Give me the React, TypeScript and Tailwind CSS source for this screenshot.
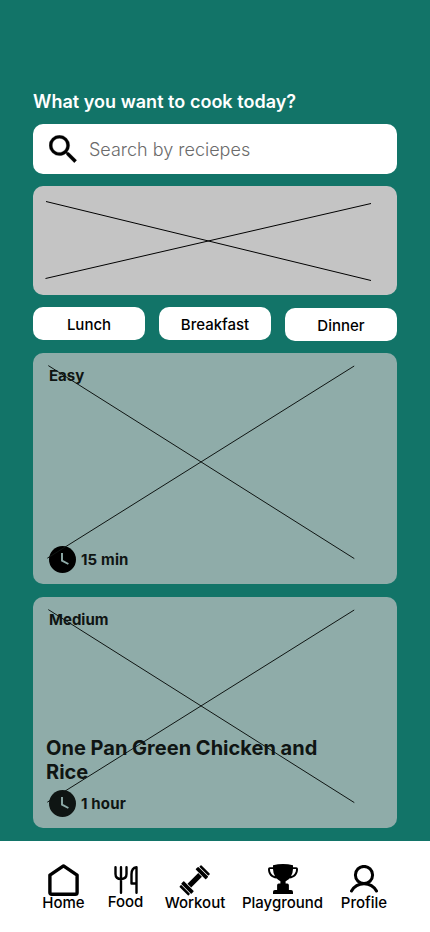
import React from "react";

function SearchIcon() {
  return (
    <svg className="mr-px h-7 w-7 shrink-0" viewBox="2.9 2.9 17.8 17.8" fill="black" stroke="black" strokeWidth=".2">
      <path d="M15.5 14h-.79l-.28-.27A6.471 6.471 0 0 0 16 9.5 6.5 6.5 0 1 0 9.5 16c1.61 0 3.09-.59 4.23-1.57l.27.28v.79l5 4.99L20.49 19l-4.99-5zm-6 0C7.01 14 5 11.99 5 9.5S7.01 5 9.5 5 14 7.01 14 9.5 11.99 14 9.5 14z" />
    </svg>
  );
}

function ClockIcon({ color }: { color: string }) {
  return (
    <svg className="h-[27px] w-[27px] shrink-0" viewBox="0 0 27 27" fill="none">
      <circle cx="13.5" cy="13.5" r="13.5" fill={color} />
      <path d="M13 7v7.6l6.4 3.4" stroke="#8faca9" strokeWidth="1.9" />
    </svg>
  );
}

function HomeIcon() {
  return (
    <svg className="h-8 w-[31px]" viewBox="0 0 31 32" fill="none" stroke="black" strokeWidth="3.4" strokeLinejoin="round">
      <path d="M15.5 1.9 29.1 11.2v17.3q0 1.8-1.8 1.8H3.7q-1.8 0-1.8-1.8V11.2Z" />
    </svg>
  );
}

function FoodIcon() {
  return (
    <svg className="h-7 w-6" viewBox="0 0 24 28" fill="none" stroke="black" strokeWidth="2.4" strokeLinecap="round" strokeLinejoin="round">
      <path d="M1.5 1.3v6.7q0 5 5.500 5t5.500-5V1.300M7 1.300v25.400M22.500 26.700V1.300c-4 .6-5 4-5 7v9.200h5" />
    </svg>
  );
}

function WorkoutIcon() {
  return (
    <svg className="h-8 w-8" viewBox="0 0 32 32">
      <g transform="translate(15.7 16.3) rotate(-45)" fill="black">
        <rect x="-7.6" y="-2.6" width="15.2" height="5.200" />
        <rect x="-12.1" y="-7.2" width="3.8" height="14.400" rx=".7" />
        <rect x="-15.4" y="-6.4" width="2.600" height="12.800" rx=".7" />
        <rect x="8.3" y="-7.2" width="3.8" height="14.400" rx=".7" />
        <rect x="12.8" y="-6.4" width="2.600" height="12.800" rx=".7" />
      </g>
    </svg>
  );
}

function TrophyIcon() {
  return (
    <svg className="h-[30px] w-[30px]" viewBox="0 0 30 30" fill="black">
      <path fillRule="evenodd" d="M5 1.2Q15-1.1 25 1.2v2h3.2q1.8 0 1.8 1.8c0 5.5-3.3 9-8.7 9.5-1.1 1.3-2.4 2.1-3.7 2.7v2.4h1.7q1.6 0 1.6 1.6v4.7h2.2q1.9 0 1.9 2.1v2H5v-2q0-2.1 1.9-2.1h2.2v-4.7q0-1.6 1.6-1.6h1.7v-2.4c-1.3-.6-2.6-1.4-3.7-2.7C3.3 14 0 10.5 0 5q0-1.8 1.8-1.8H5ZM5 5H1.9c0 3.5 1.8 6.2 5.1 7.2Q5.1 9.2 5 5Zm20 0q-.1 4.2-2 7.2c3.3-1 5.1-3.7 5.1-7.2Z" />
    </svg>
  );
}

function ProfileIcon() {
  return (
    <svg className="h-7 w-7" viewBox="0 0 28 28" fill="none" stroke="black" strokeWidth="3" strokeLinecap="round">
      <circle cx="14" cy="10" r="8.6" />
      <path d="M1.5 26C4 21.5 8.5 18.7 14 18.7S24 21.5 26.500 26" />
    </svg>
  );
}

function RecipeCard({ level, title, time, clock }: { level: string; title?: string; time: string; clock: string }) {
  return (
    <article className="relative flex h-[231px] flex-col justify-between rounded-[10px] bg-[#8faca9] pt-[14px] pb-[11px] text-[#0f1513]">
      <span className="ml-4 text-[15px] leading-[18px] font-bold">{level}</span>
      <div>
        {title && <h2 className="ml-[13px] w-[300px] text-[20px] leading-6 font-bold tracking-[0.01px]">{title}</h2>}
        <div className="mt-[6px] ml-4 flex items-center gap-[5px] text-[15px] leading-[18px] font-bold tracking-[0.15px]">
          <ClockIcon color={clock} />
          <span>{time}</span>
        </div>
      </div>
      <svg className="pointer-events-none absolute inset-0 h-full w-full" viewBox="0 0 364 231" stroke="#0f1513" strokeWidth="1">
        <path d="M15.3 12.6 321.3 205.6M14.3 205.2 321.2 13" />
      </svg>
    </article>
  );
}

export default function App() {
  return (
    <main className="flex h-[932px] w-[430px] flex-col overflow-hidden bg-[#127468] font-['Inter',sans-serif] text-black">
      <section className="flex h-[841px] flex-col px-[33px] pt-[91px]">
        <h1 className="h-[33px] text-[18px] leading-[22px] font-semibold tracking-[0.03px] whitespace-nowrap text-white">What you want to cook today?</h1>
        <div className="flex h-[50px] shrink-0 items-center gap-[11px] rounded-[10px] bg-white pl-4">
          <SearchIcon />
          <span className="text-[18px] font-light text-[#6b6b6b]">Search by reciepes</span>
        </div>
        <div className="mt-3 h-[109px] shrink-0 rounded-[10px] bg-[#c4c4c4]">
          <svg className="h-full w-full" viewBox="0 0 364 109" stroke="black" strokeWidth="1">
            <path d="M13 15.5 338 94.5M12.5 92.5 338 17.5" />
          </svg>
        </div>
        <div className="mt-3 mb-3 flex h-[34px] shrink-0 items-start justify-between text-[15px] leading-[18px] font-medium">
          <button className="h-[33px] w-28 rounded-[10px] bg-white pt-[2px]">Lunch</button>
          <button className="h-[33px] w-28 rounded-[10px] bg-white pt-[2px]">Breakfast</button>
          <button className="mt-px h-[33px] w-28 rounded-[10px] bg-white pt-[2px]">Dinner</button>
        </div>
        <div className="flex shrink-0 flex-col gap-[13px]">
          <RecipeCard level="Easy" time="15 min" clock="#000000" />
          <RecipeCard level="Medium" title="One Pan Green Chicken and Rice" time="1 hour" clock="#0f1513" />
        </div>
      </section>
      <nav className="flex h-[91px] shrink-0 items-start bg-white pt-[23px] pl-[42px] text-[15px] leading-[18px] font-medium">
        <div className="flex w-[43px] flex-col items-center"><HomeIcon /><span className="-mt-[2px]">Home</span></div>
        <div className="ml-[23px] flex w-[35px] flex-col items-center pt-[2px]"><FoodIcon /><span className="-mt-px">Food</span></div>
        <div className="ml-[22px] flex w-[60px] flex-col items-center"><WorkoutIcon /><span className="-mt-[2px]">Workout</span></div>
        <div className="ml-[17px] flex w-[81px] flex-col items-center"><TrophyIcon /><span>Playground</span></div>
        <div className="ml-[18px] flex w-[46px] flex-col items-center pt-px"><ProfileIcon /><span className="mt-px">Profile</span></div>
      </nav>
    </main>
  );
}
